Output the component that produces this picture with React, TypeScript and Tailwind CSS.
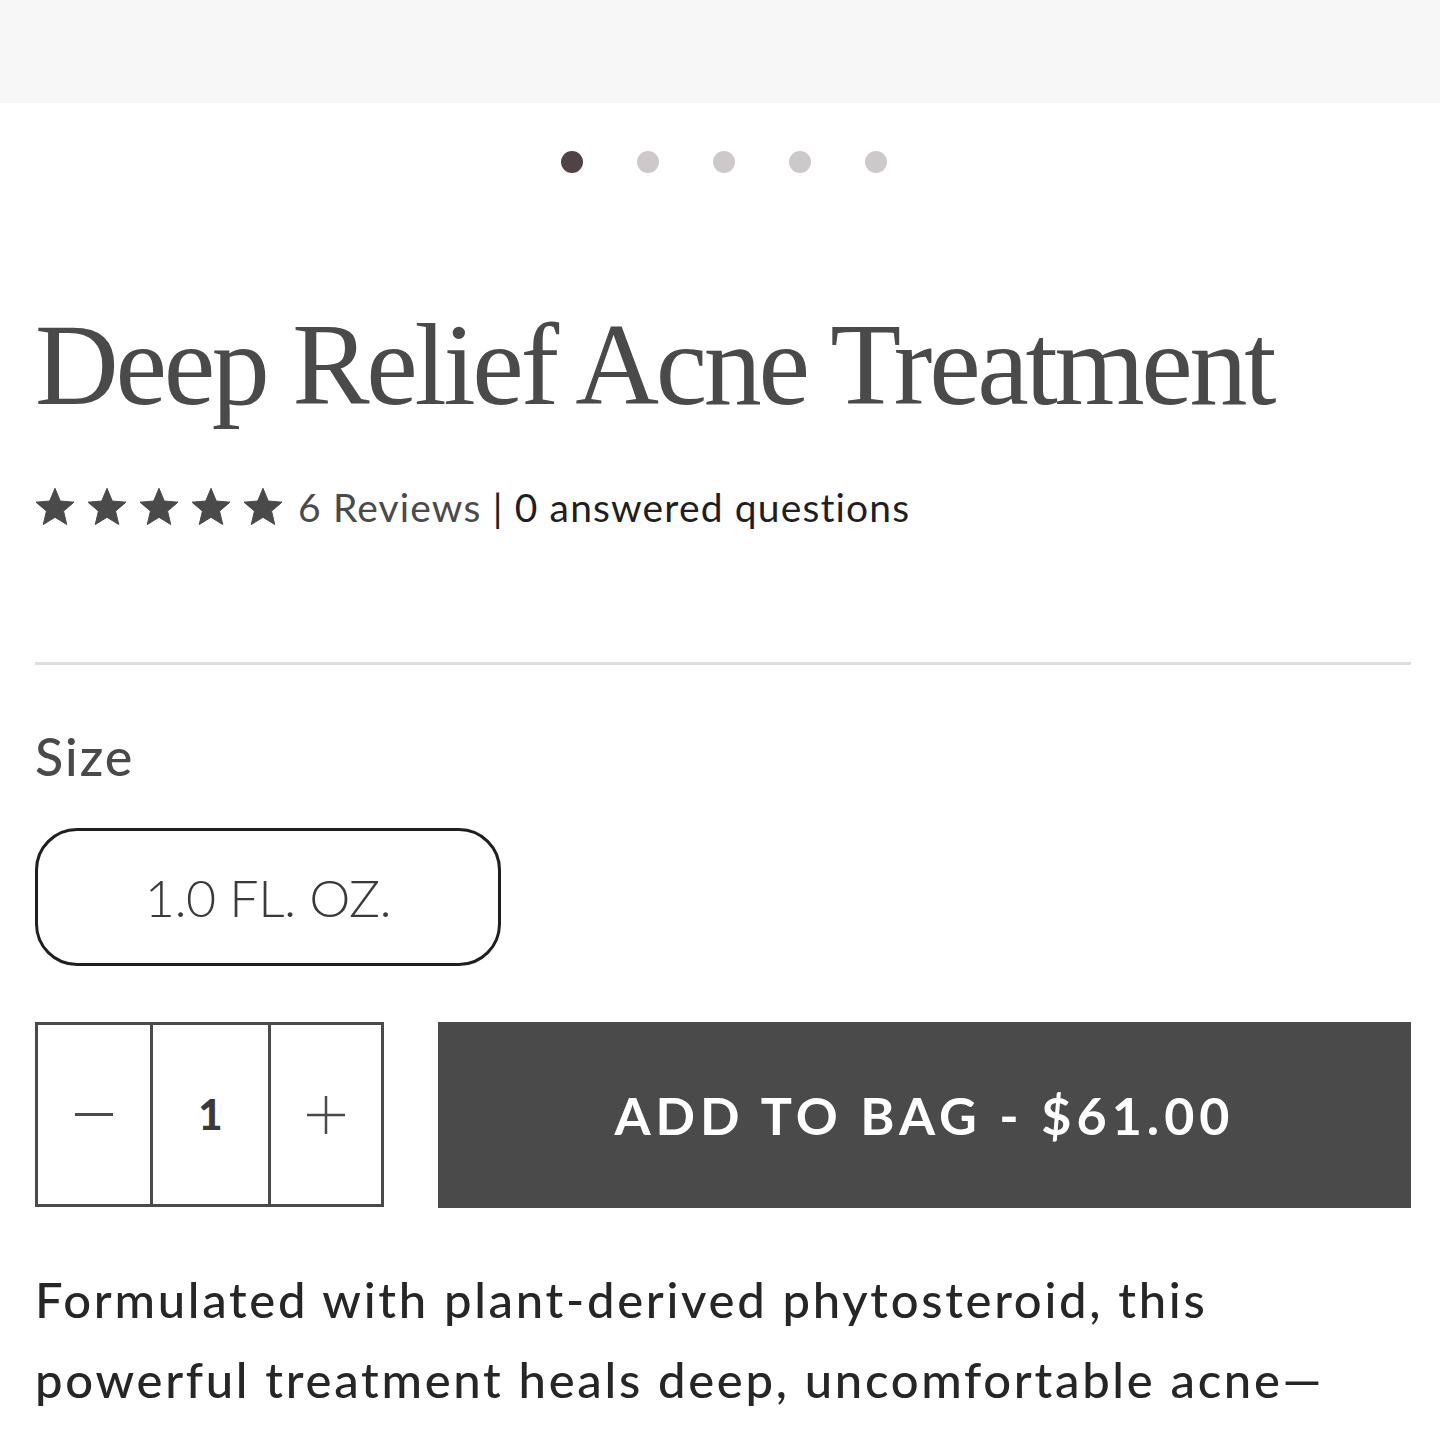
import React from "react";

const sans = { fontFamily: "Lato, 'Noto Sans', sans-serif" };

function Star() {
  const pts: string[] = [];
  for (let i = 0; i < 10; i++) {
    const r = i % 2 === 0 ? 12 : 5.4;
    const a = (Math.PI / 5) * i - Math.PI / 2;
    pts.push(`${(12 + r * Math.cos(a)).toFixed(2)},${(12.8 + r * Math.sin(a)).toFixed(2)}`);
  }
  return (
    <svg viewBox="0 0 24 24" className="w-[40px] h-[40px]" fill="#4a4a4a">
      <polygon points={pts.join(" ")} strokeLinejoin="round" stroke="#4a4a4a" strokeWidth="0.6" />
    </svg>
  );
}

export default function App() {
  return (
    <div className="w-[1440px] h-[1438px] bg-white overflow-hidden" style={sans}>
      <div className="h-[103px] bg-[#f7f7f7]" />
      <div className="flex justify-center gap-[54px] mt-[48px] pl-[7px]">
        <span className="w-[22px] h-[22px] rounded-full bg-[#4f4345]" />
        <span className="w-[22px] h-[22px] rounded-full bg-[#cdc9ca]" />
        <span className="w-[22px] h-[22px] rounded-full bg-[#cdc9ca]" />
        <span className="w-[22px] h-[22px] rounded-full bg-[#cdc9ca]" />
        <span className="w-[22px] h-[22px] rounded-full bg-[#cdc9ca]" />
      </div>
      <div className="pl-[35px] pr-[29px]">
        <h1
          className="mt-[134px] text-[116px] leading-[1] text-[#4a4a4a] tracking-[-3.3px] whitespace-nowrap"
          style={{ fontFamily: "'Liberation Serif', 'DejaVu Serif', serif" }}
        >
          Deep Relief Acne Treatment
        </h1>
        <div className="flex items-center mt-[64px] h-[40px]">
          <div className="flex gap-[12px]">
            <Star />
            <Star />
            <Star />
            <Star />
            <Star />
          </div>
          <span className="ml-[15px] text-[39px] leading-[40px] tracking-[1.15px] text-[#1f1f1f] whitespace-nowrap">
            <span className="text-[#4a4a4a]">6 Reviews</span> | 0 answered questions
          </span>
        </div>
        <div className="mt-[135px] h-[3px] bg-[#dedede]" />
        <div className="mt-[65px] text-[52px] tracking-[2px] text-[#4a4a4a] font-medium leading-[1]">Size</div>
        <div className="mt-[46px] w-[466px] h-[138px] rounded-[42px] border-[3px] border-[#1f1f1f] flex items-center justify-center text-[52px] tracking-[-0.5px] font-light text-[#3a3a3a]">
          1.0 FL. OZ.
        </div>
        <div className="mt-[56px] flex gap-[54px]">
          <div className="flex w-[349px] h-[185px] border-[3px] border-[#4a4a4a]">
            <div className="w-[115px] flex items-center justify-center border-r-[3px] border-[#4a4a4a]">
              <span className="block w-[38px] h-[3px] bg-[#4a4a4a]" />
            </div>
            <div className="w-[118px] flex items-center justify-center border-r-[3px] border-[#4a4a4a] text-[42px] font-black text-[#3a3a3a]">
              1
            </div>
            <div className="flex-1 flex items-center justify-center">
              <svg width="40" height="40" viewBox="0 0 40 40">
                <path d="M20 1v38M1 20h38" stroke="#4a4a4a" strokeWidth="2.5" />
              </svg>
            </div>
          </div>
          <button className="flex-1 h-[186px] bg-[#4a4a4a] text-white text-[52px] font-bold tracking-[5px] flex items-center justify-center whitespace-nowrap">
            ADD TO BAG - $61.00
          </button>
        </div>
        <p className="mt-[51px] text-[49px] leading-[80px] tracking-[2.7px] text-[#262626] font-medium whitespace-nowrap">
          Formulated with plant-derived phytosteroid, this
          <br />
          powerful treatment heals deep, uncomfortable acne—
        </p>
      </div>
    </div>
  );
}
